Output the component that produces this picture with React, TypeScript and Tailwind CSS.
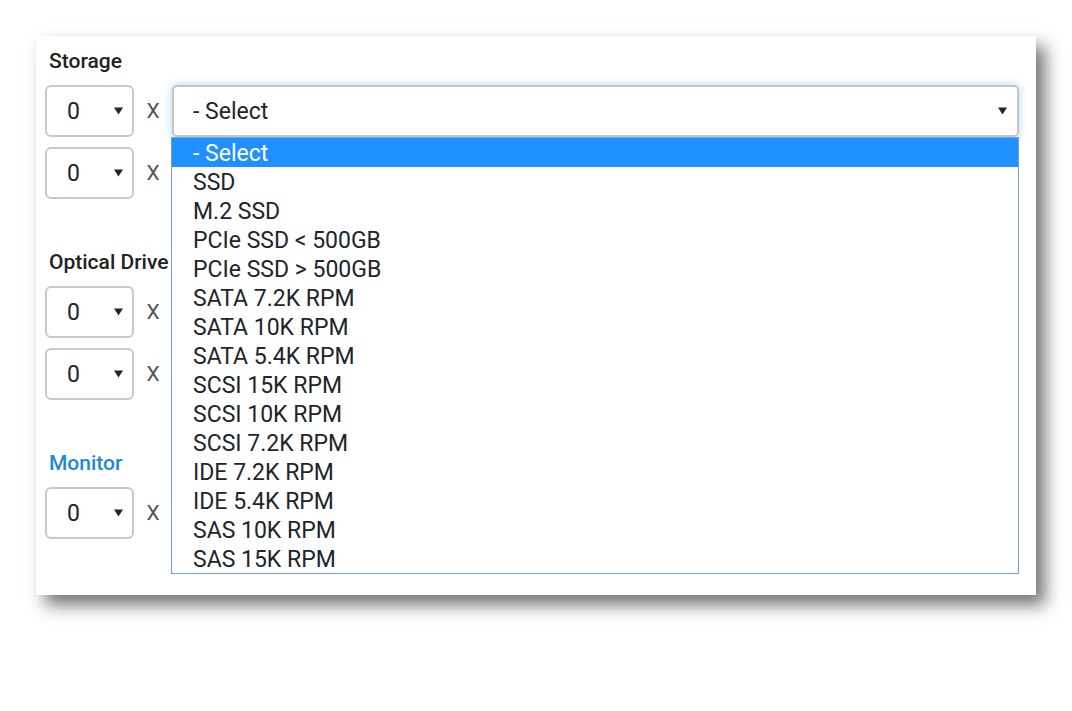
import React from 'react';

const FONT = "font-['Roboto','Liberation_Sans',sans-serif]";

const OPTIONS = [
  '- Select',
  'SSD',
  'M.2 SSD',
  'PCIe SSD < 500GB',
  'PCIe SSD > 500GB',
  'SATA 7.2K RPM',
  'SATA 10K RPM',
  'SATA 5.4K RPM',
  'SCSI 15K RPM',
  'SCSI 10K RPM',
  'SCSI 7.2K RPM',
  'IDE 7.2K RPM',
  'IDE 5.4K RPM',
  'SAS 10K RPM',
  'SAS 15K RPM'
];

const Caret = () => (
  <svg width="9" height="8" viewBox="0 0 9 8" className="shrink-0">
    <path d="M0 0.5 H9 L4.5 7.5 Z" fill="#1f2430" />
  </svg>
);

const QtySelect = () => (
  <div className="w-[89px] h-[52px] shrink-0 rounded-[6px] border-2 border-[#c9c9c9] bg-white flex items-center pl-[20px] pr-[9px]">
    <span className="flex-1 text-[23px] leading-[28px] pt-[2px] text-[#212529]">0</span>
    <Caret />
  </div>
);

const Times = () => <span className="w-[38px] shrink-0 text-center text-[21px] pt-[2px] text-[#555]">X</span>;

const Row = ({ children }: { children?: React.ReactNode }) => (
  <div className="flex items-center">
    <QtySelect />
    <Times />
    {children}
  </div>
);

export default function App() {
  return (
    <div className={`w-[1072px] h-[711px] bg-white ${FONT}`}>
      <div className="pt-[36px] pl-[36px]">
        <div className="w-[1000px] h-[559px] bg-white shadow-[9px_10px_16px_rgba(0,0,0,0.55)] pt-[13px] pl-[9px] pr-[17px]">
          <div className="ml-[4px] h-[24px] leading-[24px] text-[21px] font-medium text-[#222]">Storage</div>
          <div className="mt-[12px] flex flex-col gap-[10px]">
            <Row>
              <div className="relative flex-1">
                <div className="h-[52px] rounded-[5px] border-2 border-[#c4c4c4] bg-white shadow-[0_0_8px_rgba(102,175,233,0.55)] flex items-center pl-[19px] pr-[10px]">
                  <span className="flex-1 text-[23px] leading-[28px] pt-[2px] text-[#212529]">- Select</span>
                  <Caret />
                </div>
                <ul className="absolute z-10 left-[-1px] right-0 top-[52px] bg-white border border-[#7b9ed9]">
                  {OPTIONS.map((o, i) => (
                    <li
                      key={o}
                      className={`h-[29px] leading-[31px] pl-[21px] text-[23px] ${
                        i === 0 ? 'bg-[#1e90ff] text-white' : 'text-[#212529]'
                      }`}
                    >
                      {o}
                    </li>
                  ))}
                </ul>
              </div>
            </Row>
            <Row />
          </div>

          <div className="mt-[51px] ml-[4px] h-[24px] leading-[24px] text-[21px] font-medium text-[#222]">Optical Drive</div>
          <div className="mt-[12px] flex flex-col gap-[10px]">
            <Row />
            <Row />
          </div>

          <div className="mt-[51px] ml-[4px] h-[24px] leading-[24px] text-[21px] font-medium text-[#1d89d4]">Monitor</div>
          <div className="mt-[12px] flex flex-col gap-[10px]">
            <Row />
          </div>
        </div>
      </div>
    </div>
  );
}
